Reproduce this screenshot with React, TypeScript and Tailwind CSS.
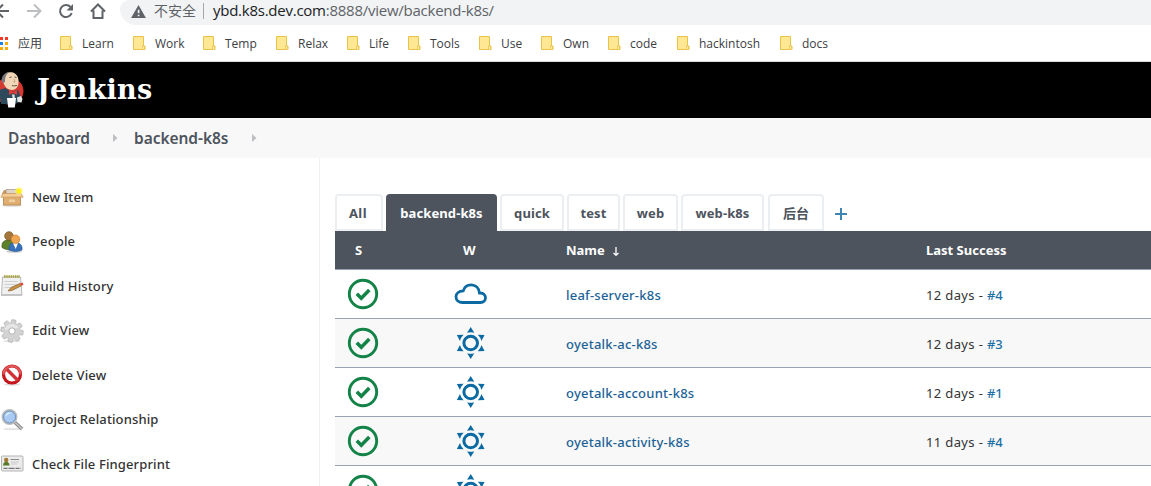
import React from 'react';

const Folder = () => (
  <svg width="13" height="15" viewBox="0 0 13 15" className="block shrink-0">
    <path d="M.5.5h10v9.500h1.500v3.500H.5z" fill="#ffe793" stroke="#e8c34a" />
    <path d="M9.500 13.500v-3.500h2v3.500z" fill="#fff0b5" stroke="#e8c34a" strokeWidth=".8" />
  </svg>
);

const bookmarks: [string, string][] = [
  ['Learn', 'w-[73px]'], ['Work', 'w-[70px]'], ['Temp', 'w-[73px]'], ['Relax', 'w-[71px]'],
  ['Life', 'w-[61px]'], ['Tools', 'w-[71px]'], ['Use', 'w-[62px]'], ['Own', 'w-[67px]'],
  ['code', 'w-[69px]'], ['hackintosh', 'w-[103px]'], ['docs', 'w-[70px]'],
];

const appDots = ['#ea4335', '#f13a2c', '#f13a2c', '#34a853', '#1a82e8', '#fbab05', '#34a853', '#fbab05', '#fbab05'];

function BrowserBar() {
  return (
    <div className="h-[62px] overflow-hidden border-b border-[#dadce0] bg-white font-['Open_Sans','Noto_Sans_CJK_SC',sans-serif]">
      <div className="flex h-[25px]">
        <svg width="120" height="25" viewBox="0 0 120 25" fill="none" className="shrink-0">
          <path d="M9 11H-4M3 4.500l-6.500 6.500L3 17.500" stroke="#5f6368" strokeWidth="2" />
          <path d="M27 11h13M34 4.500l6.500 6.500-6.500 6.500" stroke="#bcbec1" strokeWidth="2" />
          <path d="M70.500 7A6 6 0 1 0 71.700 13" stroke="#5f6368" strokeWidth="2" />
          <path d="M73 4v6.500h-6.500z" fill="#5f6368" />
          <path d="M91 11.500 98 4.500l7 7M93.500 10.500v7.500h9v-7.500" stroke="#5f6368" strokeWidth="2" />
        </svg>
        <div className="flex h-[25px] flex-1 items-center rounded-bl-[16px] rounded-tl-[9px] bg-[#f1f3f4] pl-[11px]">
          <svg width="15" height="13" viewBox="0 0 16 14" className="-mt-[3px] shrink-0">
            <path d="M8 0 16 14H0z" fill="#5f6368" />
            <path d="M7.200 5h1.800v4H7.200zM7.200 10.500h1.800v1.700H7.200z" fill="#f1f3f4" />
          </svg>
          <span className="-mt-[4px] ml-[8px] w-[49px] whitespace-nowrap text-[14px] text-[#5f6368]">不安全</span>
          <span className="-mt-[3px] h-[16px] w-px bg-[#a5a8ac]" />
          <span className="-mt-[4px] ml-[9px] whitespace-nowrap text-[15px] tracking-[-0.25px] text-[#202124]">ybd.k8s.dev.com<span className="text-[#5f6368]">:8888/view/backend-k8s/</span></span>
        </div>
      </div>
      <div className="flex h-[36px] items-center text-[12px] text-[#3c4043]">
        <div className="flex w-[60px] items-center">
          <div className="-ml-[5px] grid grid-cols-[repeat(3,3px)] gap-[2px]">
            {appDots.map((c, i) => <span key={i} className="h-[3px] w-[3px]" style={{ background: c }} />)}
          </div>
          <span className="ml-[10px] whitespace-nowrap pt-[1px]">应用</span>
        </div>
        {bookmarks.map(([name, w]) => (
          <div key={name} className={`flex shrink-0 items-center gap-[9px] ${w}`}>
            <Folder /><span className="whitespace-nowrap pt-[2px]">{name}</span>
          </div>
        ))}
      </div>
    </div>
  );
}

const Butler = () => (
  <svg width="24" height="40" viewBox="0 0 24 40" className="block shrink-0">
    <ellipse cx="9" cy="21" rx="14.500" ry="13.500" fill="#d33833" />
    <path d="M-1 20 5 18 12 22 18 20 20 25 21 31 15 34 1 34z" fill="#2c4a5c" />
    <path d="M3 9C4 3 9 1.500 13 2.500c4 1.500 6 5 5.500 10 0 4.500-3 7.500-6.500 7.500-5 0-8-4-9-9z" fill="#f0d6b7" />
    <path d="M2.500 13C0 8 4 2 9.500 2 6 4 5 7 5 12z" fill="#77787e" />
    <path d="M9.500 7.500l2-.500M14.500 7l2 .500M12 15.500c2 .8 4 0 5 0" stroke="#4e3a30" strokeWidth=".9" fill="none" />
    <path d="M14 9l1 3h-1.500" stroke="#b58d6d" strokeWidth=".7" fill="none" />
    <path d="M9 20l4 2 4-2v5l-4-2-4 2z" fill="#e03b36" />
    <path d="M12 24.500h2.500l.5 6h-2z" fill="#e6e6e6" />
    <path d="M7 28h9l-1.200 9.500H8.200z" fill="#fff" />
    <path d="M17 27.500l4-1.500 1.500 3-1 3.500-4-.500z" fill="#e3e3e3" />
  </svg>
);

const Chevron = () => <svg width="5" height="8" viewBox="0 0 5 8" className="-mt-px block shrink-0"><path d="M0 0 4.500 4 0 8z" fill="#bdbfc2" /></svg>;

const gearTeeth = [0, 45, 90, 135, 180, 225, 270, 315];

const icons: Record<string, React.ReactNode> = {
  item: <>
    <ellipse cx="12" cy="20.500" rx="10" ry="1.300" fill="#ddd" />
    <path d="M4 5.500h15l2 4H2z" fill="#c8965a" stroke="#c08a4c" strokeWidth=".6" />
    <path d="M6 4.500h11v4.500H6z" fill="#ded5c8" stroke="#8d8375" strokeWidth=".6" />
    <path d="M3.500 11h17v9h-17z" fill="#dfae70" stroke="#b98346" strokeWidth=".8" />
    <path d="M3 8.500h18l2.200 3.700H.8z" fill="#f2cb95" stroke="#c8955a" strokeWidth=".7" />
    <path d="M9 14.500h6v2.500H9z" fill="#f0d1a0" />
    <circle cx="19" cy="6" r="3.800" fill="#fff36a" opacity=".7" /><circle cx="19" cy="6" r="2.200" fill="#fff200" />
  </>,
  people: <>
    <ellipse cx="14" cy="21.500" rx="8" ry="1.300" fill="#ccc" />
    <path d="M2 17.500v-2c0-4 3-5.500 7-5.500s5 3 5 6v2.500c-4 2-8 1.500-12-1z" fill="#5d8128" stroke="#3d5c15" strokeWidth=".7" />
    <circle cx="9" cy="6" r="4.300" fill="#a5773d" stroke="#7a5122" strokeWidth=".7" />
    <path d="M9 20v-2c0-3.500 3-5.500 6-5.500 4 0 7 2 7 5.500v2q-6.500 3-13 0z" fill="#3972bb" stroke="#285a9c" strokeWidth=".7" />
    <path d="M13 13h5l-2.300 6z" fill="#fff" />
    <circle cx="15.500" cy="9.300" r="4.300" fill="#f0a550" stroke="#cf7f2e" strokeWidth=".7" />
  </>,
  history: <>
    <path d="M2.500 3h18l1.500 18h-20.500z" fill="#f0f0f0" stroke="#b0b0b0" strokeWidth=".9" />
    <path d="M1 20h21v2H1z" fill="#c4c4c4" />
    <path d="M4 2.500h16" stroke="#a39b35" strokeWidth="2.500" strokeDasharray="1.500 .7" />
    <path d="M4.500 7.500h13M4.500 10.500h13M4.500 13.500h7" stroke="#c8c8c8" strokeWidth=".8" />
    <path d="M8 17l3-3.500 9-4 1.500 2.200-9 4.500z" fill="#c79045" stroke="#7a531e" strokeWidth=".6" /><path d="M20 9.500l2.500-1 1 2-2 1.200z" fill="#e5403b" />
  </>,
  gear: <>
    <ellipse cx="12" cy="22" rx="9" ry="1.200" fill="#e4e4e4" />
    {gearTeeth.map((a) => <path key={a} d="M10 .8h4l1 6H9z" fill="#d2d2d2" stroke="#aaa" strokeWidth=".6" transform={`rotate(${a + 10} 12 12)`} />)}
    <circle cx="12" cy="12" r="8" fill="#d3d3d3" /><path d="M4.500 11a7.500 7.500 0 0 1 14-2z" fill="#e6e6e6" />
    <circle cx="12" cy="12" r="3.200" fill="#fff" stroke="#b0b0b0" />
  </>,
  stop: <>
    <ellipse cx="12" cy="21.500" rx="8" ry="1.200" fill="#ddd" />
    <circle cx="12" cy="11.500" r="8.500" fill="#fff" stroke="#c4161c" strokeWidth="3.200" />
    <path d="M6 5.500 18 17.500" stroke="#cf3336" strokeWidth="3.400" />
    <path d="M3.500 11.500a8.500 8.500 0 0 1 17 0" fill="none" stroke="#e35a5c" strokeWidth="2" />
  </>,
  search: <>
    <ellipse cx="12" cy="21" rx="9" ry="1.300" fill="#e6e6e6" />
    <path d="M15 14.500 22 21" stroke="#858585" strokeWidth="3.600" /><path d="M15.500 15 21.800 20.800" stroke="#ccc" strokeWidth="1.500" />
    <circle cx="9.500" cy="9" r="7" fill="#8eb9eb" stroke="#bdbdbd" strokeWidth="2" /><circle cx="9.500" cy="9" r="6" fill="#a9cbf3" stroke="#5c86bb" strokeWidth=".8" />
    <path d="M5 9q1-6 8-4-5 0-8 4z" fill="#e6f2ff" />
  </>,
  card: <>
    <rect x="1.500" y="4" width="21.500" height="15" rx="1" fill="#ececec" stroke="#b3b3b3" />
    <circle cx="6.200" cy="8" r="2.200" fill="#a57935" /><path d="M3 13.500c0-5 6.500-5 6.500 0z" fill="#567c28" />
    <path d="M10.500 7.500h8.500" stroke="#8a8a8a" /><path d="M11 10h8M11 12h6" stroke="#c0c0c0" strokeWidth=".8" /><path d="M3.500 16.300h17.500" stroke="#555" strokeDasharray="4 1 6 1" />
  </>,
};

const tasks = [
  ['item', 'New Item'], ['people', 'People'], ['history', 'Build History'], ['gear', 'Edit View'],
  ['stop', 'Delete View'], ['search', 'Project Relationship'], ['card', 'Check File Fingerprint'],
];

const tabs: [string, string][] = [
  ['All', 'w-[48px]'], ['backend-k8s', 'w-[111px]'], ['quick', 'w-[64px]'], ['test', 'w-[53px]'],
  ['web', 'w-[55px]'], ['web-k8s', 'w-[83px]'], ['后台', 'ml-px w-[56px]'],
];

const Check = () => (
  <svg width="32" height="32" viewBox="0 0 32 32" fill="none" className="block">
    <circle cx="16" cy="16" r="13.700" stroke="#138347" strokeWidth="2.900" />
    <path d="M9.800 15.800 14.300 20.300 22.300 12" stroke="#138347" strokeWidth="3.500" />
  </svg>
);
const Cloud = () => (
  <svg width="34" height="32" viewBox="0 0 34 32" fill="none" className="block">
    <path d="M8.500 24.500h18c3 0 5-2 5-4.700s-2-4.800-5-4.800h-1c-.5-5-4-8.200-8.300-8.200-4 0-6.900 2.300-8 6-4 .2-7.200 2.500-7.200 5.900 0 3.500 2.800 5.800 6.500 5.800z" stroke="#0b6aa2" strokeWidth="2.800" />
  </svg>
);
const Sun = () => (
  <svg width="34" height="32" viewBox="-.7 0 34 32" fill="none" className="block">
    <circle cx="16" cy="16" r="6.800" stroke="#0b6aa2" strokeWidth="3" />
    {[0, 60, 120, 180, 240, 300].map((a) => <path key={a} d="M16 0 19.600 5.700Q16 4.600 12.400 5.700z" fill="#0b6aa2" transform={`rotate(${a} 16 16)`} />)}
  </svg>
);

const jobs = [
  ['leaf-server-k8s', '12 days', '#4'], ['oyetalk-ac-k8s', '12 days', '#3'],
  ['oyetalk-account-k8s', '12 days', '#1'], ['oyetalk-activity-k8s', '11 days', '#4'], ['', '', ''],
];

const columns = 'grid grid-cols-[107px_124px_360px_1fr]';

export default function App() {
  return (
    <div className="h-[486px] w-[1151px] overflow-hidden bg-white font-['Noto_Sans','Noto_Sans_CJK_SC',sans-serif] text-[13px] text-[#333]">
      <BrowserBar />
      <header className="flex h-[56px] items-center bg-black">
        <Butler />
        <span className="ml-[13px] font-['DejaVu_Serif',Georgia,serif] text-[27px] font-bold tracking-[0.3px] text-white">Jenkins</span>
      </header>
      <nav className="flex h-[40px] items-center bg-[#f8f8f8] pl-[8px] text-[15.5px] font-semibold tracking-[-0.05px] text-[#4d545d]">
        <span className="w-[105px] whitespace-nowrap pt-px">Dashboard</span><Chevron />
        <span className="ml-[16px] w-[118px] whitespace-nowrap pt-px">backend-k8s</span><Chevron />
      </nav>
      <main className="flex h-[328px]">
        <aside className="w-[320px] shrink-0 border-r border-[#f0f0f0] pt-[17px]">
          {tasks.map(([icon, label]) => (
            <div key={label} className="flex h-[44.5px] items-center">
              <svg width="24" height="24" viewBox="0 0 24 24" className="block shrink-0">{icons[icon]}</svg>
              <span className="ml-[8px] whitespace-nowrap font-medium tracking-[0.12px]">{label}</span>
            </div>
          ))}
        </aside>
        <section className="flex-1 pl-[15px] pt-[36px]">
          <div className="flex h-[37px] gap-[3px]">
            {tabs.map(([name, w]) => (
              <div key={name} className={`flex h-full shrink-0 items-center justify-center whitespace-nowrap rounded-t-[4px] pt-[2px] font-bold ${w} ${name === 'backend-k8s' ? 'bg-[#4d545d] text-white' : 'border-2 border-[#ebeff2] bg-white text-[#4d545d]'} ${name === 'All' ? 'pr-[2px] tracking-[0.5px]' : 'tracking-[0.1px]'}`}>{name}</div>
            ))}
            <svg width="12" height="12" viewBox="0 0 12 12" className="ml-[8px] mt-[14px]"><path d="M6 0v12M0 6h12" stroke="#3c86b2" strokeWidth="2" /></svg>
          </div>
          <div className={`${columns} h-[39px] items-center border-b border-[#98a3b1] bg-[#4d545d] pt-[2px] font-bold text-white`}>
            <span className="pl-[20px]">S</span>
            <span className="pl-[21px]">W</span>
            <span className="flex items-center whitespace-nowrap">Name
              <svg width="6" height="9" viewBox="0 0 6 9" fill="none" className="ml-[8px]"><path d="M3 0v8M.5 6 3 8.300 5.500 6" stroke="#fff" strokeWidth="1.300" /></svg>
            </span>
            <span>Last Success</span>
          </div>
          {jobs.map(([name, age, build], i) => (
            <div key={i} className={`${columns} h-[49px] items-center border-b border-[#98a3b1] ${i % 2 ? 'bg-[#f8f8f8]' : 'bg-white'}`}>
              <span className="pl-[12px]"><Check /></span>
              <span className="pl-[12px]">{i === 0 ? <Cloud /> : <Sun />}</span>
              <span className="whitespace-nowrap pt-[3px] font-medium tracking-[0.23px] text-[#1c6296]">{name}</span>
              {name && <span className="whitespace-nowrap pt-[3px] tracking-[0.36px]">{age} - <span className="font-medium tracking-normal text-[#1c6ea5]">{build}</span></span>}
            </div>
          ))}
        </section>
      </main>
    </div>
  );
}
